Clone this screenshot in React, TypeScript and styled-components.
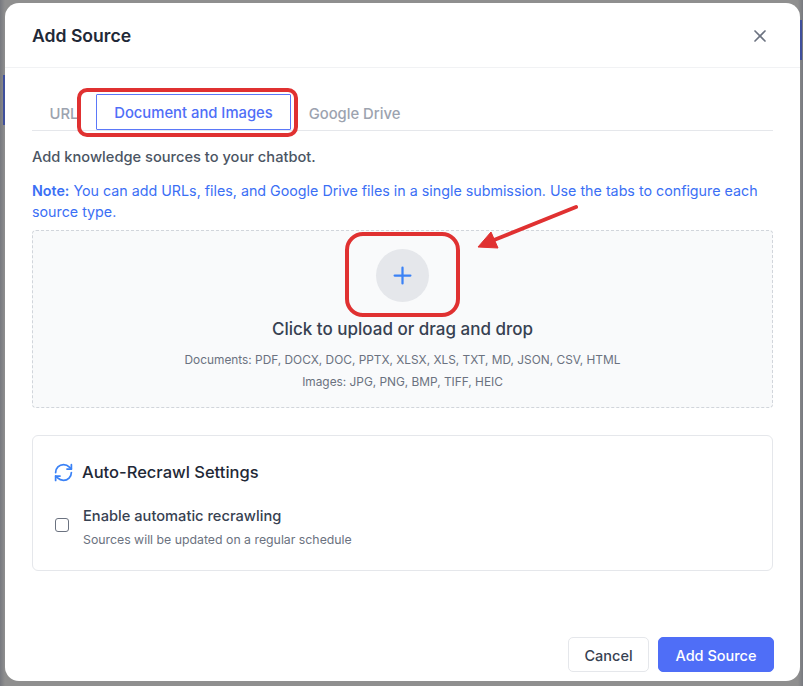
import React from "react";
import styled, { createGlobalStyle } from "styled-components";
import { RefreshCw, Plus, X } from "lucide-react";

const Global = createGlobalStyle`
  html, body { margin: 0; padding: 0; }
  body { width: 803px; height: 686px; overflow: hidden; background: #8f8f8f; font-family: Inter, "Liberation Sans", sans-serif; }
  * { box-sizing: border-box; }
`;

const Backdrop = styled.div`
  position: relative;
  width: 803px;
  height: 686px;
  padding: 3px 3px 5px 5px;
  background:
    linear-gradient(#3f4f9c, #3f4f9c) 3px 75px / 2px 50px no-repeat,
    linear-gradient(#3f4f9c, #3f4f9c) 800px 20px / 2px 40px no-repeat,
    linear-gradient(90deg, #77797f 0, #8f8f8f 5px, #8f8f8f 798px, #77797f 803px);
`;

const Modal = styled.div`
  height: 678px;
  background: #fff;
  border-radius: 14px;
  display: flex;
  flex-direction: column;
`;

const Header = styled.header`
  height: 65px;
  flex: none;
  display: flex;
  align-items: center;
  justify-content: space-between;
  padding: 1px 30px 0 27px;
  border-bottom: 1px solid #f1f2f4;
`;

const Title = styled.h2`
  margin: 0;
  font-size: 17.6px;
  line-height: 24px;
  font-weight: 600;
  color: #1f2937;
`;

const CloseButton = styled.button`
  display: flex;
  padding: 0;
  border: 0;
  background: none;
  color: #6b7280;
`;

const Body = styled.div`
  flex: 1;
  display: flex;
  flex-direction: column;
  padding: 26px 27px 0;
`;

const Tabs = styled.nav`
  height: 37px;
  display: flex;
  align-items: stretch;
  border-bottom: 1px solid #e5e7eb;
`;

const Tab = styled.button<{ $active?: boolean; $width: number }>`
  width: ${(p) => p.$width}px;
  height: 36px;
  flex: none;
  padding: ${(p) => (p.$active ? "2px 0 0" : "3px 0 0")};
  font: 500 14.8px/20px Inter, "Liberation Sans", sans-serif;
  color: ${(p) => (p.$active ? "#4f6ef7" : "#9ca3af")};
  background: #fff;
  border: ${(p) => (p.$active ? "1px solid #5b78f8" : "0")};
  border-radius: 1px;
`;

const Lead = styled.p`
  margin: 16px 0 0;
  font-size: 14.67px;
  line-height: 20px;
  font-weight: 500;
  color: #4b5563;
`;

const Note = styled.p`
  margin: 13px 0 0;
  font-size: 14.28px;
  line-height: 21px;
  color: #3b6ff5;
  strong { font-weight: 600; }
`;

const Dropzone = styled.div`
  height: 178px;
  margin-top: 8px;
  display: flex;
  flex-direction: column;
  align-items: center;
  background: #f9fafb;
  border: 1px dashed #d1d5db;
  border-radius: 4px;
`;

const PlusCircle = styled.div`
  width: 53px;
  height: 53px;
  margin-top: 18px;
  display: flex;
  align-items: center;
  justify-content: center;
  border-radius: 50%;
  background: #e5e7eb;
  color: #3b82f6;
`;

const DropTitle = styled.div`
  margin-top: 15px;
  font-size: 17px;
  line-height: 24px;
  font-weight: 500;
  color: #374151;
`;

const DropHint = styled.div`
  font-size: 11.86px;
  line-height: 22px;
  color: #6b7280;
`;

const DropHints = styled.div`
  margin-top: 8px;
  text-align: center;
`;

const SettingsCard = styled.section`
  height: 136px;
  margin-top: 27px;
  padding: 24px 22px 0;
  border: 1px solid #e5e7eb;
  border-radius: 6px;
`;

const SettingsTitle = styled.h3`
  margin: 0;
  display: flex;
  align-items: center;
  gap: 8px;
  font-size: 16.5px;
  line-height: 24px;
  font-weight: 500;
  color: #1f2937;
  svg { color: #3b82f6; margin-left: -2px; }
`;

const OptionRow = styled.label`
  margin-top: 22px;
  display: flex;
  align-items: center;
  gap: 14px;
`;

const CheckBox = styled.span`
  width: 14px;
  height: 14px;
  flex: none;
  margin-top: -6px;
  background: #fff;
  border: 1.5px solid #6b7280;
  border-radius: 3px;
`;

const OptionLabel = styled.div`
  font-size: 14.67px;
  line-height: 20px;
  font-weight: 500;
  color: #374151;
`;

const OptionHint = styled.div`
  margin-top: 5px;
  font-size: 12.3px;
  line-height: 18px;
  color: #6b7280;
`;

const Footer = styled.footer`
  margin: auto -1px 0 0;
  padding-bottom: 9px;
  display: flex;
  justify-content: flex-end;
  gap: 9px;
`;

const Button = styled.button<{ $primary?: boolean }>`
  height: 35px;
  width: ${(p) => (p.$primary ? 116 : 81)}px;
  padding: 3px 0 0;
  font: 500 14.5px/20px Inter, "Liberation Sans", sans-serif;
  border-radius: 5px;
  color: ${(p) => (p.$primary ? "#fff" : "#374151")};
  background: ${(p) => (p.$primary ? "#4f6ef7" : "#fff")};
  border: 1px solid ${(p) => (p.$primary ? "#4f6ef7" : "#e5e7eb")};
`;

const Highlight = styled.div<{ $x: number; $y: number; $w: number; $h: number; $r: number }>`
  position: absolute;
  left: ${(p) => p.$x}px;
  top: ${(p) => p.$y}px;
  width: ${(p) => p.$w}px;
  height: ${(p) => p.$h}px;
  border: 4px solid #e03131;
  border-radius: ${(p) => p.$r}px;
  pointer-events: none;
`;

const Arrow = styled.svg`
  position: absolute;
  left: 470px;
  top: 200px;
  pointer-events: none;
`;

export default function App() {
  return (
    <>
      <Global />
      <Backdrop>
        <Modal>
          <Header>
            <Title>Add Source</Title>
            <CloseButton aria-label="Close">
              <X size={20} strokeWidth={2} />
            </CloseButton>
          </Header>
          <Body>
            <Tabs>
              <Tab $width={64}>URL</Tab>
              <Tab $active $width={195}>Document and Images</Tab>
              <Tab $width={127}>Google Drive</Tab>
            </Tabs>
            <Lead>Add knowledge sources to your chatbot.</Lead>
            <Note>
              <strong>Note:</strong> You can add URLs, files, and Google Drive files in a single submission. Use the tabs to configure each source type.
            </Note>
            <Dropzone>
              <PlusCircle>
                <Plus size={27} strokeWidth={2} />
              </PlusCircle>
              <DropTitle>Click to upload or drag and drop</DropTitle>
              <DropHints>
                <DropHint>Documents: PDF, DOCX, DOC, PPTX, XLSX, XLS, TXT, MD, JSON, CSV, HTML</DropHint>
                <DropHint>Images: JPG, PNG, BMP, TIFF, HEIC</DropHint>
              </DropHints>
            </Dropzone>
            <SettingsCard>
              <SettingsTitle>
                <RefreshCw size={21} strokeWidth={2} />
                Auto-Recrawl Settings
              </SettingsTitle>
              <OptionRow>
                <CheckBox />
                <div>
                  <OptionLabel>Enable automatic recrawling</OptionLabel>
                  <OptionHint>Sources will be updated on a regular schedule</OptionHint>
                </div>
              </OptionRow>
            </SettingsCard>
            <Footer>
              <Button>Cancel</Button>
              <Button $primary>Add Source</Button>
            </Footer>
          </Body>
        </Modal>
        <Highlight $x={77} $y={88} $w={221} $h={49} $r={10} />
        <Highlight $x={345} $y={232} $w={115} $h={85} $r={18} />
        <Arrow width="115" height="50" viewBox="0 0 115 50">
          <path d="M106 7 L24 40" stroke="#e03131" strokeWidth="4" strokeLinecap="round" fill="none" />
          <path d="M8 47 L21 32 L28 48 Z" fill="#e03131" stroke="#e03131" strokeWidth="1" strokeLinejoin="round" />
        </Arrow>
      </Backdrop>
    </>
  );
}
